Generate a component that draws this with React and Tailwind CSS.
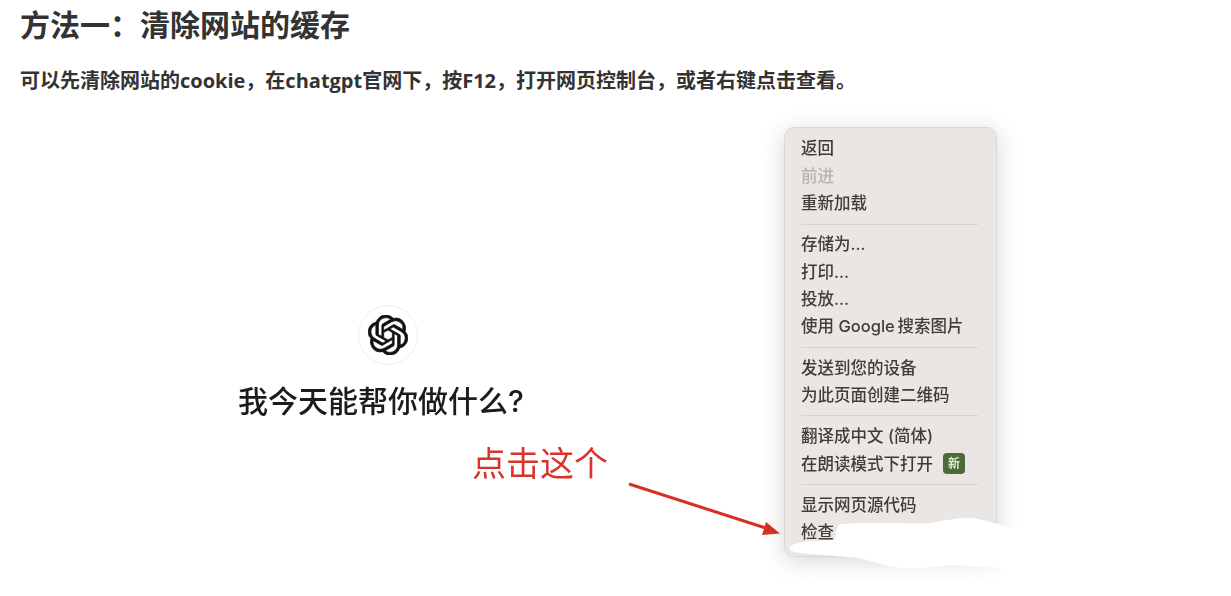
import React from 'react';
import { SiOpenai } from 'react-icons/si';

const cjk = "font-['Open_Sans','Noto_Sans_CJK_SC',sans-serif]";

const menuGroups = [
  [{ label: '返回' }, { label: '前进', disabled: true }, { label: '重新加载' }],
  [{ label: '存储为...' }, { label: '打印...' }, { label: '投放...' }, { label: '使用 Google\u2009搜索图片' }],
  [{ label: '发送到您的设备' }, { label: '为此页面创建二维码' }],
  [{ label: '翻译成中文 (简体)' }, { label: '在朗读模式下打开', isNew: true }],
  [{ label: '显示网页源代码' }, { label: '检查' }],
];

const MenuRow = ({ item }) => (
  <div className={`flex h-[27.4px] items-center text-[16.5px] whitespace-nowrap ${item.disabled ? 'text-[#b5b3b0]' : 'text-[#3f3d39]'}`}>
    <span>{item.label}</span>
    {item.isNew && (
      <span className="ml-[10px] flex h-[21px] w-[22px] items-center justify-center rounded-[4px] bg-[#4c6b38] text-[12px] font-bold text-[#dfe8d8]">
        新
      </span>
    )}
  </div>
);

const ContextMenu = () => (
  <div className="absolute left-[784px] top-[127px] h-[430px] w-[213px] rounded-[10px] border border-[#dcd9d5] bg-[#e9e6e3] pl-[16px] pr-[18px] pt-[7px] font-['Inter','Noto_Sans_CJK_SC',sans-serif] font-medium shadow-[0_4px_24px_rgba(0,0,0,0.16)]">
    {menuGroups.map((group, i) => (
      <div key={i}>
        {i > 0 && <div className="my-[6.4px] h-px bg-[#d6d3cf]" />}
        {group.map((item) => (
          <MenuRow key={item.label} item={item} />
        ))}
      </div>
    ))}
  </div>
);

export default function App() {
  return (
    <div className={`h-[596px] w-[1231px] overflow-hidden bg-white text-[#333] ${cjk}`}>
      <h2 className="pl-[20px] pt-[4px] text-[30px] leading-[42px] font-bold">方法一：清除网站的缓存</h2>
      <p className="mt-[20px] pl-[20px] text-[20px] leading-[30px] font-bold">
        可以先清除网站的cookie，在chatgpt官网下，按F12，打开网页控制台，或者右键点击查看。
      </p>

      {/* the pasted screenshot, everything on it is placed freely */}
      <div className="relative -mt-[96px] h-[596px] w-[1231px] blur-[0.5px]">
        <div className="absolute left-[358px] top-[305px] flex h-[60px] w-[60px] items-center justify-center rounded-full border border-[#ececec] bg-white">
          <SiOpenai className="h-[40px] w-[40px] text-[#111]" strokeWidth={0.45} />
        </div>
        <div className="absolute left-[238px] top-[379px] font-['Inter','Noto_Sans_CJK_SC',sans-serif] text-[30px] leading-[44px] font-medium whitespace-nowrap text-[#1c1c1c]">
          我今天能帮你做什么?
        </div>
        <div className="absolute left-[472px] top-[439px] font-['Noto_Sans_CJK_SC',sans-serif] text-[34px] leading-[46px] font-normal whitespace-nowrap text-[#d9342b]">
          点击这个
        </div>

        <ContextMenu />

        <svg className="absolute left-[620px] top-[475px]" width="170" height="70" viewBox="0 0 170 70" fill="none">
          <path d="M9 9 L152 55" stroke="#d72e26" strokeWidth="3" />
          <path d="M160 58.5 L146 47 L142 60 Z" fill="#d72e26" />
        </svg>

        {/* white scribble covering the rest of the menu bottom */}
        <svg className="absolute left-[780px] top-[510px]" width="260" height="75" viewBox="0 0 260 75" fill="white">
          <path d="M10 36 C20 30 40 31 55 30 C56 20 58 15 60 14 C90 12 130 14 150 13 C165 10 178 8 190 8 C205 9 215 14 235 18 C245 20 255 24 260 30 L260 60 C220 58 190 56 170 55 C150 58 120 60 105 55 C95 52 85 50 80 48 C60 46 25 44 14 42 C10 41 8 38 10 36 Z" />
        </svg>
      </div>
    </div>
  );
}
